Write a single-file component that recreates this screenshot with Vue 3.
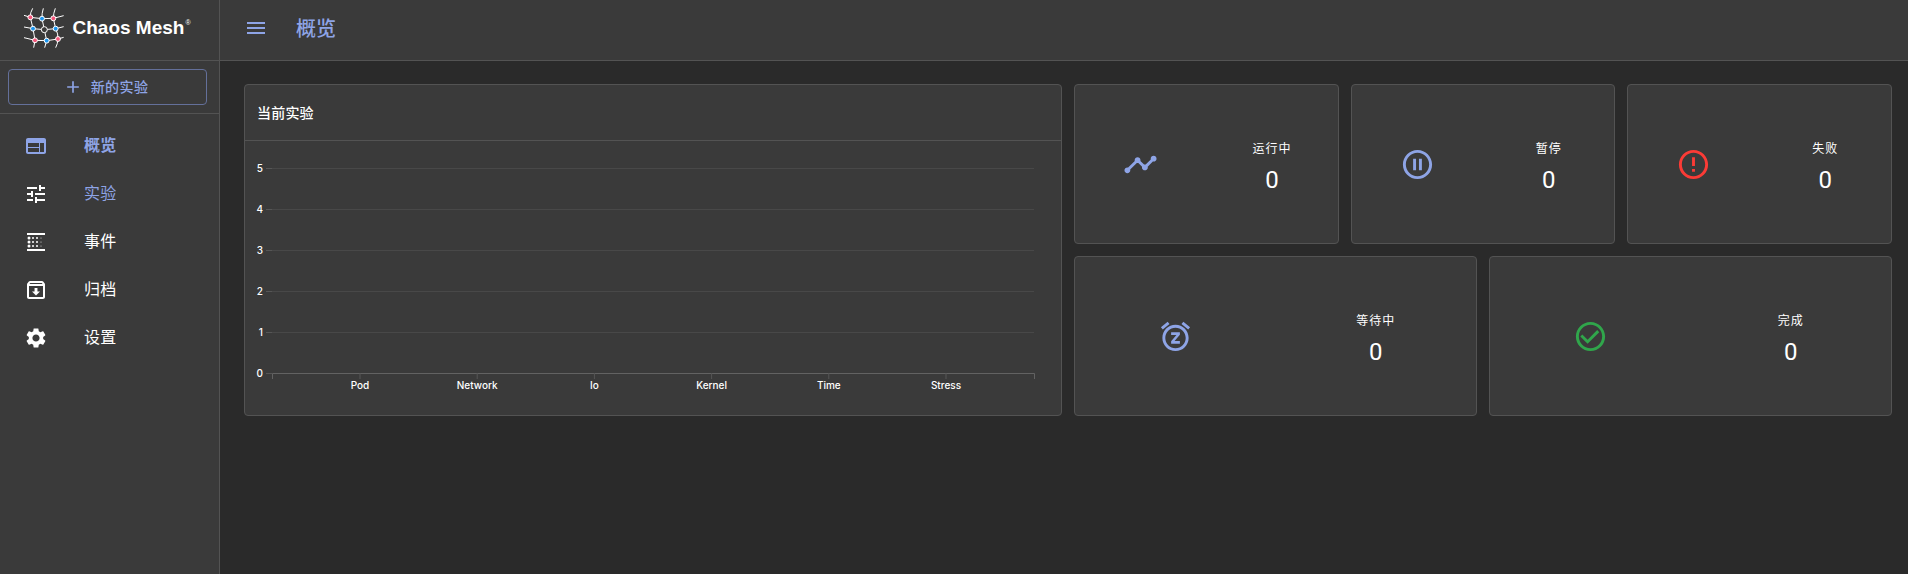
<script setup>
const icons = {
  web: 'M20 4H4c-1.1 0-1.99.9-1.99 2L2 18c0 1.1.9 2 2 2h16c1.1 0 2-.9 2-2V6c0-1.1-.9-2-2-2zm-5 14H4v-4h11v4zm0-5H4V9h11v4zm5 5h-4V9h4v9z',
  tune: 'M3 17v2h6v-2H3zM3 5v2h10V5H3zm10 16v-2h8v-2h-8v-2h-2v6h2zM7 9v2H3v2h4v2h2V9H7zm14 4v-2H11v2h10zm-6-4h2V7h4V5h-4V3h-2v6z',
  archive: 'M20.54 5.23l-1.39-1.68C18.88 3.21 18.47 3 18 3H6c-.47 0-.88.21-1.16.55L3.46 5.23C3.17 5.57 3 6.02 3 6.5V19c0 1.1.9 2 2 2h14c1.1 0 2-.9 2-2V6.5c0-.48-.17-.93-.46-1.27zM6.24 5h11.52l.83 1H5.42l.82-1zM5 19V8h14v11H5zm11-5.5l-4 4-4-4h2.55V10h2.9v3.5H16z',
  settings: 'M19.14 12.94c.04-.3.06-.61.06-.94 0-.32-.02-.64-.07-.94l2.03-1.58c.18-.14.23-.41.12-.61l-1.92-3.32c-.12-.22-.37-.29-.59-.22l-2.39.96c-.5-.38-1.03-.7-1.62-.94l-.36-2.54c-.04-.24-.24-.41-.48-.41h-3.84c-.24 0-.43.17-.47.41l-.36 2.54c-.59.24-1.13.57-1.62.94l-2.39-.96c-.22-.08-.47 0-.59.22L2.74 8.87c-.12.21-.08.47.12.61l2.03 1.58c-.05.3-.09.63-.09.94s.02.64.07.94l-2.03 1.58c-.18.14-.23.41-.12.61l1.92 3.32c.12.22.37.29.59.22l2.39-.96c.5.38 1.03.7 1.62.94l.36 2.54c.05.24.24.41.48.41h3.84c.24 0 .44-.17.47-.41l.36-2.54c.59-.24 1.13-.56 1.62-.94l2.39.96c.22.08.47 0 .59-.22l1.92-3.32c.12-.22.07-.47-.12-.61l-2.01-1.58zM12 15.6c-1.98 0-3.6-1.62-3.6-3.6s1.62-3.6 3.6-3.6 3.6 1.62 3.6 3.6-1.62 3.6-3.6 3.6z',
  timeline: 'M23 8c0 1.1-.9 2-2 2-.18 0-.35-.02-.51-.07l-3.56 3.55c.05.16.07.34.07.52 0 1.1-.9 2-2 2s-2-.9-2-2c0-.18.02-.36.07-.52l-2.55-2.55c-.16.05-.34.07-.52.07s-.36-.02-.52-.07l-4.55 4.56c.05.16.07.33.07.51 0 1.1-.9 2-2 2s-2-.9-2-2 .9-2 2-2c.18 0 .35.02.51.07l4.56-4.55C8.02 9.36 8 9.18 8 9c0-1.1.9-2 2-2s2 .9 2 2c0 .18-.02.36-.07.52l2.55 2.55c.16-.05.34-.07.52-.07s.36.02.52.07l3.55-3.56C19.02 8.35 19 8.18 19 8c0-1.1.9-2 2-2s2 .9 2 2z',
  pause: 'M9 16h2V8H9v8zm3-14C6.48 2 2 6.48 2 12s4.48 10 10 10 10-4.48 10-10S17.52 2 12 2zm0 18c-4.41 0-8-3.59-8-8s3.59-8 8-8 8 3.59 8 8-3.59 8-8 8zm1-4h2V8h-2v8z',
  error: 'M11 15h2v2h-2zm0-8h2v6h-2zm.99-5C6.47 2 2 6.48 2 12s4.47 10 9.99 10C17.52 22 22 17.52 22 12S17.52 2 11.99 2zM12 20c-4.42 0-8-3.58-8-8s3.58-8 8-8 8 3.58 8 8-3.58 8-8 8z',
  snooze: 'M7.88 3.39L6.6 1.86 2 5.71l1.29 1.53 4.59-3.85zM22 5.72l-4.6-3.86-1.29 1.53 4.6 3.86L22 5.72zM12 4c-4.97 0-9 4.03-9 9s4.02 9 9 9c4.97 0 9-4.03 9-9s-4.03-9-9-9zm0 16c-3.87 0-7-3.13-7-7s3.13-7 7-7 7 3.13 7 7-3.13 7-7 7zm-3-9h3.63L9 15.2V17h6v-2h-3.63L15 10.8V9H9v2z',
  check: 'M16.59 7.58L10 14.17l-3.59-3.58L5 12l5 5 8-8zM12 2C6.48 2 2 6.48 2 12s4.48 10 10 10 10-4.48 10-10S17.52 2 12 2zm0 18c-4.42 0-8-3.58-8-8s3.58-8 8-8 8 3.58 8 8-3.58 8-8 8z'
}

const menu = [
  { label: '概览', icon: 'web', cls: 'active' },
  { label: '实验', icon: 'tune', cls: 'hovered' },
  { label: '事件', icon: 'blur', cls: '' },
  { label: '归档', icon: 'archive', cls: '' },
  { label: '设置', icon: 'settings', cls: '' }
]

const blurDots = [
  [5, 8, 1.5], [5, 12, 1.5], [5, 16, 1.5],
  [9, 8, 1], [9, 12, 1], [9, 16, 1],
  [13, 8, 1], [13, 12, 1], [13, 16, 1],
  [17, 8, 0.5], [17, 12, 0.5], [17, 16, 0.5]
]

const stats = [
  { label: '运行中', value: 0, icon: 'timeline', tone: 'primary', wide: false },
  { label: '暂停', value: 0, icon: 'pause', tone: 'primary', wide: false },
  { label: '失败', value: 0, icon: 'error', tone: 'danger', wide: false },
  { label: '等待中', value: 0, icon: 'snooze', tone: 'primary', wide: true },
  { label: '完成', value: 0, icon: 'check', tone: 'success', wide: true }
]

const yTicks = [5, 4, 3, 2, 1, 0].map((v, i) => ({ v, y: 27.5 + i * 41 }))
const xTicks = ['Pod', 'Network', 'Io', 'Kernel', 'Time', 'Stress'].map((name, i) => ({ name, x: 115 + i * 117.2 }))
</script>

<template>
  <div class="app">
    <aside class="sidebar">
      <div class="brand">
        <svg class="mesh" viewBox="0 0 150 168" width="50" height="56">
          <g fill="none" stroke="#fff" stroke-width="3">
            <path d="M12 46L31 52L66 56L100 55L131 47" />
            <path d="M12 81L39 86L73 89L107 86L131 80" />
            <path d="M12 113L45 121L80 122L114 117L131 112" />
            <path d="M38 25Q30 38 31 52L39 86L45 121L41 143" />
            <path d="M70 25Q65 40 66 56L73 89L80 122L74 143" />
            <path d="M106 25Q100 40 100 55L107 86Q115 102 114 117Q113 132 107 143" />
          </g>
          <g stroke="#fff" stroke-width="3">
            <g fill="#f5567b">
              <circle cx="31" cy="52" r="7.3" /><circle cx="100" cy="55" r="7.3" />
              <circle cx="45" cy="121" r="7.3" /><circle cx="114" cy="117" r="7.3" />
            </g>
            <g fill="#1c95ee">
              <circle cx="66" cy="56" r="7.3" /><circle cx="39" cy="86" r="7.3" />
              <circle cx="107" cy="86" r="7.3" /><circle cx="80" cy="122" r="7.3" />
            </g>
            <circle cx="73" cy="89" r="9" fill="#3a3a3a" />
          </g>
        </svg>
        <span class="wordmark">Chaos Mesh</span><span class="reg">®</span>
      </div>
      <div class="create">
        <button class="new-btn">
          <svg viewBox="0 0 24 24" width="20" height="20"><path d="M19 13h-6v6h-2v-6H5v-2h6V5h2v6h6v2z" /></svg>
          <span>新的实验</span>
        </button>
      </div>
      <nav class="menu">
        <a v-for="m in menu" :key="m.label" class="item" :class="m.cls">
          <svg class="item-icon" viewBox="0 0 24 24" width="24" height="24">
            <template v-if="m.icon === 'blur'">
              <path d="M3 3h18v2H3zM3 19h18v2H3z" />
              <circle v-for="(d, i) in blurDots" :key="i" :cx="d[0]" :cy="d[1]" :r="d[2]" />
            </template>
            <path v-else :d="icons[m.icon]" />
          </svg>
          <span>{{ m.label }}</span>
        </a>
      </nav>
    </aside>

    <div class="content">
      <header class="topbar">
        <svg viewBox="0 0 24 24" width="24" height="24"><path d="M3 18h18v-2H3v2zm0-5h18v-2H3v2zm0-7v2h18V6H3z" /></svg>
        <h1>概览</h1>
      </header>
      <main class="board">
        <section class="card chart-card">
          <h2>当前实验</h2>
          <svg class="chart" viewBox="0 0 816 274" width="816" height="274">
            <g v-for="t in yTicks" :key="t.v">
              <line v-if="t.v > 0" class="grid" x1="27" x2="789" :y1="t.y" :y2="t.y" />
              <line class="tick" x1="21" x2="27" :y1="t.y" :y2="t.y" />
              <text x="18" :y="t.y + 3.5" text-anchor="end">{{ t.v }}</text>
            </g>
            <path class="domain" d="M27.5 238V232.5H789.5V238" />
            <g v-for="t in xTicks" :key="t.name">
              <line class="tick" :x1="t.x" :x2="t.x" y1="232" y2="238" />
              <text :x="t.x" y="248" text-anchor="middle">{{ t.name }}</text>
            </g>
          </svg>
        </section>
        <section class="stats">
          <div v-for="s in stats" :key="s.label" class="card stat" :class="{ wide: s.wide }">
            <div class="stat-icon" :class="s.tone">
              <svg viewBox="0 0 24 24" width="35" height="35"><path :d="icons[s.icon]" /></svg>
            </div>
            <div class="stat-text">
              <span class="stat-label">{{ s.label }}</span>
              <span class="stat-value">{{ s.value }}</span>
            </div>
          </div>
        </section>
      </main>
    </div>
  </div>
</template>

<style>
body {
  background: #2a2a2a;
}
</style>

<style scoped>
.app {
  display: flex;
  height: 574px;
  overflow: hidden;
  color: #fff;
  background: #2a2a2a;
  font-family: Roboto, "Noto Sans CJK SC", sans-serif;
}
.app * {
  box-sizing: border-box;
}
svg {
  display: block;
  flex: none;
  fill: currentColor;
}
.sidebar {
  width: 220px;
  flex: none;
  background: #3a3a3a;
  border-right: 1px solid #535353;
}
.brand {
  display: flex;
  height: 61px;
  padding-left: 20px;
  border-bottom: 1px solid #535353;
}
.wordmark {
  margin-left: 2.5px;
  padding-top: 17px;
  font: bold 19px/22px "Liberation Sans", sans-serif;
  white-space: nowrap;
}
.reg {
  margin-left: 1px;
  padding-top: 18px;
  font: 7px/9px "Liberation Sans", sans-serif;
}
.create {
  height: 53px;
  padding: 8px 12px 8px 8px;
  border-bottom: 1px solid #535353;
}
.new-btn {
  display: flex;
  align-items: center;
  justify-content: center;
  gap: 8px;
  width: 199px;
  height: 36px;
  padding: 0 4px 0 0;
  color: #8ea4e6;
  background: none;
  border: 1px solid #64709a;
  border-radius: 4px;
  font: 500 14px/24px Roboto, "Noto Sans CJK SC", sans-serif;
  letter-spacing: 0.4px;
}
.menu {
  padding-top: 8px;
}
.item {
  display: flex;
  align-items: center;
  height: 48px;
  padding-left: 24px;
  font-size: 16px;
  line-height: 24px;
  letter-spacing: 0.15px;
}
.item span {
  margin-left: 36px;
}
.active {
  color: #8ea4e6;
  font-weight: 700;
}
.hovered span {
  color: #8ea4e6;
}
.content {
  flex: 1;
  min-width: 0;
}
.topbar {
  display: flex;
  align-items: center;
  gap: 28px;
  height: 61px;
  padding: 0 24px 4px;
  color: #8ea4e6;
  background: #3a3a3a;
  border-bottom: 1px solid #535353;
}
.topbar h1 {
  margin: 0;
  padding-top: 1px;
  font-size: 20px;
  font-weight: 500;
  line-height: 32px;
}
.board {
  display: grid;
  grid-template-columns: 818px 818px;
  gap: 12px;
  padding: 23px 16px 0 24px;
}
.card {
  background: #3a3a3a;
  border: 1px solid #535353;
  border-radius: 4px;
}
.chart-card {
  height: 332px;
}
.chart-card h2 {
  height: 56px;
  margin: 0;
  padding-left: 12px;
  border-bottom: 1px solid #535353;
  font-size: 14px;
  font-weight: 500;
  line-height: 56px;
  letter-spacing: 0.2px;
}
.chart text {
  fill: #fff;
  font: 500 10px Inter, sans-serif;
}
.grid {
  stroke: #484848;
}
.tick {
  stroke: #565656;
}
.domain {
  fill: none;
  stroke: #626262;
}
.stats {
  display: grid;
  grid-template-columns: repeat(6, 1fr);
  grid-auto-rows: 160px;
  gap: 12px;
}
.stat {
  display: grid;
  grid-template-columns: 1fr 1fr;
  grid-column: span 2;
  align-items: center;
  justify-items: center;
}
.wide {
  grid-column: span 3;
}
.stat-text {
  display: flex;
  flex-direction: column;
  align-items: center;
}
.stat-label {
  font-size: 12px;
  line-height: 32px;
  letter-spacing: 1px;
}
.stat-value {
  font-size: 24px;
  line-height: 30px;
}
.primary {
  color: #8ea4e6;
}
.danger {
  color: #fb3b36;
}
.success {
  color: #30a64b;
}
</style>
